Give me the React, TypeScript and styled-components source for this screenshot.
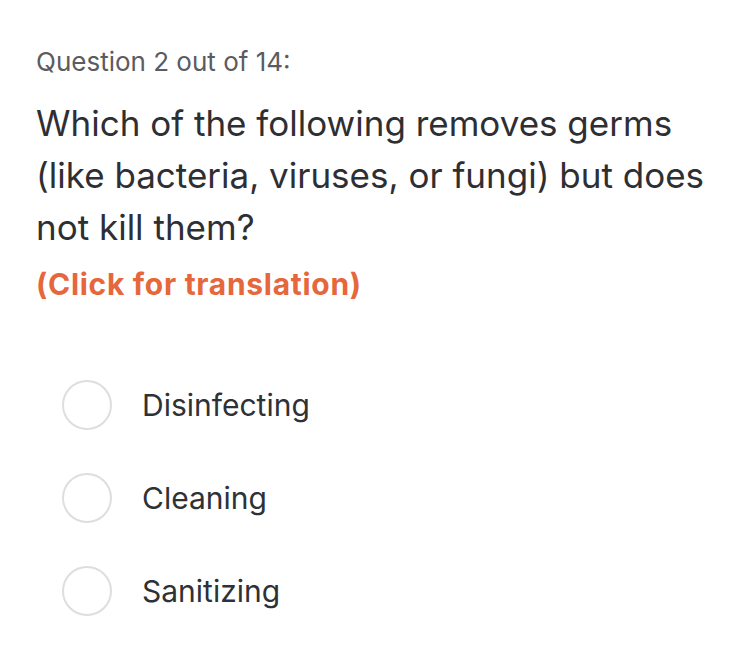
import React from "react";
import styled, { createGlobalStyle } from "styled-components";

const Global = createGlobalStyle`
  html, body { margin: 0; padding: 0; background: #ffffff; }
  body { font-family: Inter, "Noto Sans", sans-serif; }
`;

const Page = styled.div`
  padding: 44px 36px 0 36px;
  display: flex;
  flex-direction: column;
`;

const Counter = styled.div`
  font-size: 26px;
  line-height: 36px;
  color: #5a5c61;
`;

const Question = styled.div`
  margin-top: 17px;
  font-size: 35px;
  line-height: 52px;
  color: #2e2f33;
  max-width: 690px;
`;

const Translate = styled.div`
  margin-top: 9px;
  font-size: 30px;
  line-height: 44px;
  font-weight: 700;
  letter-spacing: 0.7px;
  color: #e5673b;
  cursor: pointer;
`;

const Options = styled.div`
  margin-top: 74px;
  padding-left: 26px;
  display: flex;
  flex-direction: column;
  gap: 43px;
`;

const Option = styled.label`
  display: flex;
  align-items: center;
  gap: 30px;
  height: 50px;
  cursor: pointer;
`;

const Radio = styled.span`
  width: 46px;
  height: 46px;
  border-radius: 50%;
  border: 2px solid #dedede;
  flex-shrink: 0;
`;

const OptionText = styled.span`
  font-size: 30px;
  color: #2e3137;
`;

export default function App() {
  const options = ["Disinfecting", "Cleaning", "Sanitizing"];
  return (
    <>
      <Global />
      <Page>
        <Counter>Question 2 out of 14:</Counter>
        <Question>
          Which of the following removes germs (like bacteria, viruses, or fungi) but does not kill them?
        </Question>
        <Translate>(Click for translation)</Translate>
        <Options>
          {options.map((o) => (
            <Option key={o}>
              <Radio />
              <OptionText>{o}</OptionText>
            </Option>
          ))}
        </Options>
      </Page>
    </>
  );
}
